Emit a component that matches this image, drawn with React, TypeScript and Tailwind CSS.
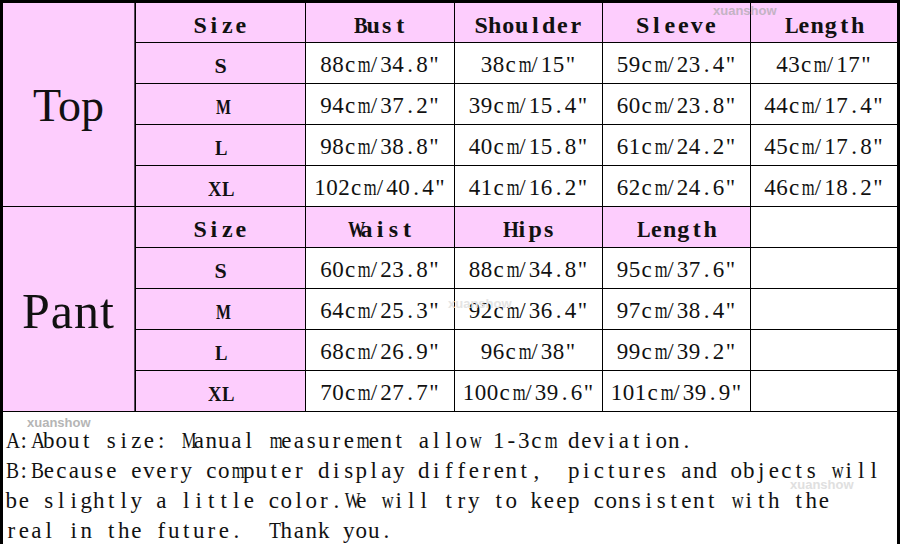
import React from 'react';

// size chart data (top / pant)
const TOP_HEAD = ['Size', 'Bust', 'Shoulder', 'Sleeve', 'Length'];
const TOP_ROWS = [
  ['S', '88cm/34.8"', '38cm/15"', '59cm/23.4"', '43cm/17"'],
  ['M', '94cm/37.2"', '39cm/15.4"', '60cm/23.8"', '44cm/17.4"'],
  ['L', '98cm/38.8"', '40cm/15.8"', '61cm/24.2"', '45cm/17.8"'],
  ['XL', '102cm/40.4"', '41cm/16.2"', '62cm/24.6"', '46cm/18.2"'],
];

const PANT_HEAD = ['Size', 'Waist', 'Hips', 'Length'];
const PANT_ROWS = [
  ['S', '60cm/23.8"', '88cm/34.8"', '95cm/37.6"'],
  ['M', '64cm/25.3"', '92cm/36.4"', '97cm/38.4"'],
  ['L', '68cm/26.9"', '96cm/38"', '99cm/39.2"'],
  ['XL', '70cm/27.7"', '100cm/39.6"', '101cm/39.9"'],
];

const NOTES = [
  'A:About size: Manual measurement allow 1-3cm deviation.',
  'B:Because every computer display different,  pictures and objects will',
  'be slightly a little color.We will try to keep consistent with the',
  'real in the future.  Thank you.',
];

const serif = "font-['Liberation_Serif','Times_New_Roman',serif]";

// the original uses a half-width CJK font: every glyph sits in a fixed cell
const squeeze = (c: string) => {
  if ('mMwW'.includes(c)) return 'scale-x-[0.72]';
  if ('ABCDGHKLNOQRTUVXY'.includes(c)) return 'scale-x-[0.85]';
  return '';
};

const Chars = ({ text, cell }: { text: string; cell: string }) => (
  <span className="whitespace-pre">
    {Array.from(text).map((c, i) => (
      <span key={i} className={`inline-block text-center ${cell} ${squeeze(c)}`}>
        {c}
      </span>
    ))}
  </span>
);

const Head = ({ text }: { text: string }) => (
  <div className={`bg-[#fdcdfd] flex items-center justify-center pt-[4px] ${serif} text-[24px] font-bold text-[#111]`}>
    <Chars text={text} cell="w-[13.5px]" />
  </div>
);

const SizeCell = ({ text }: { text: string }) => (
  <div className={`bg-[#fdcdfd] flex items-center justify-center pt-[5px] ${serif} text-[22px] font-bold text-[#111]`}>
    <Chars text={text} cell="w-[13.5px]" />
  </div>
);

const Val = ({ text }: { text: string }) => (
  <div className={`bg-white flex items-center justify-center pt-[5px] ${serif} text-[23px] text-[#111] whitespace-nowrap`}>
    <Chars text={text} cell="w-[12px]" />
  </div>
);

const Mark = ({ className }: { className: string }) => (
  <div className={`absolute font-['Liberation_Sans',Arial,sans-serif] font-bold text-[13px] leading-none pointer-events-none ${className}`}>
    xuanshow
  </div>
);

export default function App() {
  return (
    <div className="relative w-[900px] h-[544px] bg-black p-[3px] overflow-hidden">
      <div className="grid h-full grid-cols-[132px_169px_148px_147px_147px_146px] grid-rows-[39px_repeat(9,40px)_1fr] gap-px bg-black">
        {/* TOP */}
        <div className={`row-span-5 bg-[#fdcdfd] border-r border-[#5a4a5a] flex items-center justify-center ${serif} text-[46px] text-[#111] pt-[2px]`}>
          Top
        </div>
        {TOP_HEAD.map((h) => (
          <Head key={'th' + h} text={h} />
        ))}
        {TOP_ROWS.map((r) => (
          <React.Fragment key={'t' + r[0]}>
            <SizeCell text={r[0]} />
            {r.slice(1).map((v, i) => (
              <Val key={i} text={v} />
            ))}
          </React.Fragment>
        ))}

        {/* PANT */}
        <div className={`row-span-5 bg-[#fdcdfd] border-r border-[#5a4a5a] flex items-center justify-center ${serif} text-[50px] tracking-[1px] text-[#111] pt-[4px]`}>
          Pant
        </div>
        {PANT_HEAD.map((h) => (
          <Head key={'ph' + h} text={h} />
        ))}
        <div className="bg-white" />
        {PANT_ROWS.map((r) => (
          <React.Fragment key={'p' + r[0]}>
            <SizeCell text={r[0]} />
            {r.slice(1).map((v, i) => (
              <Val key={i} text={v} />
            ))}
            <div className="bg-white" />
          </React.Fragment>
        ))}

        {/* notes */}
        <div className={`col-span-6 bg-white pl-[2px] pt-[14px] ${serif} text-[23px] leading-[30px] text-[#111]`}>
          {NOTES.map((n) => (
            <div key={n} className="whitespace-nowrap">
              <Chars text={n} cell="w-[12.5px]" />
            </div>
          ))}
        </div>
      </div>

      {/* watermarks */}
      <Mark className="left-[713px] top-[4px] text-[#c4b3c4]" />
      <Mark className="left-[27px] top-[416px] text-[#b5b5b5]" />
      <Mark className="left-[448px] top-[297px] text-[#e4e4e4]" />
      <Mark className="left-[790px] top-[478px] text-[#e0e0e0]" />
    </div>
  );
}
